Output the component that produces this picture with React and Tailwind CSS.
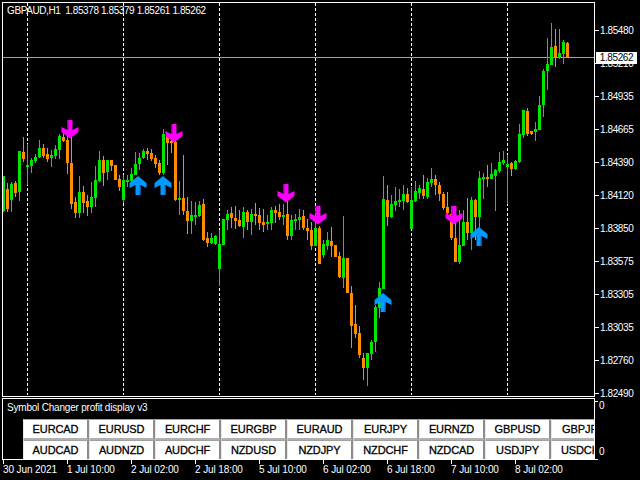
const UP = 1
const DN = 0

// [type, wickTop, wickBottom, bodyTop, bodyBottom], one candle every 4px from x=3
const candles = [
  [UP, 176, 212, 176, 211], [DN, 183, 212, 189, 209], [UP, 182, 212, 184, 200], [DN, 181, 197, 183, 193],
  [UP, 151, 201, 151, 192], [DN, 137, 162, 152, 159], [UP, 144, 185, 165, 167], [UP, 158, 173, 160, 166],
  [UP, 154, 163, 157, 161], [UP, 140, 158, 148, 157], [DN, 144, 158, 148, 156], [DN, 148, 162, 154, 159],
  [UP, 150, 167, 155, 158], [UP, 145, 159, 149, 156], [UP, 134, 159, 136, 150], [DN, 133, 142, 137, 141],
  [DN, 135, 174, 140, 163], [DN, 137, 209, 163, 204], [DN, 197, 218, 202, 213], [UP, 176, 218, 192, 213],
  [DN, 186, 213, 192, 203], [DN, 195, 216, 201, 207], [UP, 182, 213, 197, 207], [UP, 166, 207, 180, 198],
  [UP, 151, 182, 160, 181], [DN, 156, 186, 160, 173], [UP, 160, 180, 160, 172], [DN, 160, 171, 160, 166],
  [DN, 165, 180, 165, 180], [DN, 175, 191, 179, 187], [UP, 175, 203, 180, 200], [UP, 175, 187, 180, 182],
  [UP, 168, 182, 174, 181], [UP, 152, 175, 164, 175], [UP, 153, 170, 158, 164], [UP, 149, 159, 151, 158],
  [DN, 148, 160, 151, 154], [DN, 149, 161, 153, 159], [DN, 155, 168, 158, 164], [DN, 160, 175, 163, 173],
  [UP, 129, 175, 134, 173], [DN, 135, 165, 135, 143], [DN, 140, 153, 141, 143], [DN, 141, 201, 142, 200],
  [UP, 181, 215, 198, 200], [DN, 155, 215, 198, 211], [DN, 197, 234, 211, 221], [UP, 201, 234, 215, 221],
  [UP, 202, 225, 215, 217], [UP, 201, 217, 205, 216], [DN, 199, 241, 204, 240], [DN, 232, 247, 238, 243],
  [UP, 233, 244, 238, 243], [UP, 235, 245, 236, 244], [UP, 230, 286, 244, 269], [UP, 219, 245, 219, 245],
  [UP, 210, 230, 214, 220], [DN, 207, 228, 213, 218], [DN, 206, 229, 218, 221], [DN, 210, 227, 220, 226],
  [UP, 207, 238, 212, 227], [DN, 210, 230, 212, 222], [UP, 209, 235, 214, 222], [DN, 203, 225, 214, 216],
  [DN, 208, 230, 215, 223], [DN, 209, 232, 222, 225], [UP, 215, 230, 222, 224], [UP, 207, 230, 210, 223],
  [DN, 206, 223, 210, 213], [DN, 204, 220, 212, 217], [UP, 204, 225, 215, 216], [DN, 201, 240, 214, 236],
  [UP, 215, 240, 220, 236], [UP, 214, 230, 219, 221], [UP, 209, 230, 217, 220], [DN, 210, 230, 216, 228],
  [DN, 219, 240, 228, 231], [DN, 222, 250, 230, 246], [UP, 220, 246, 228, 246], [DN, 226, 264, 228, 264],
  [UP, 240, 258, 244, 255], [UP, 232, 250, 240, 246], [DN, 227, 257, 241, 246], [DN, 245, 257, 245, 257],
  [DN, 252, 278, 256, 277], [UP, 216, 288, 258, 278], [DN, 258, 293, 258, 293], [DN, 286, 348, 293, 326],
  [DN, 305, 338, 324, 334], [DN, 326, 358, 333, 355], [DN, 353, 380, 358, 368], [UP, 353, 386, 353, 368],
  [UP, 340, 360, 342, 354], [UP, 305, 352, 307, 342], [UP, 282, 318, 288, 308], [UP, 176, 289, 199, 289],
  [DN, 185, 226, 200, 217], [UP, 195, 218, 204, 217], [UP, 187, 211, 201, 205], [UP, 189, 207, 200, 202],
  [UP, 185, 210, 194, 201], [DN, 188, 203, 194, 202], [UP, 187, 229, 200, 229], [UP, 181, 202, 191, 201],
  [UP, 185, 199, 188, 193], [DN, 175, 199, 189, 196], [UP, 178, 199, 182, 197], [UP, 168, 187, 179, 183],
  [DN, 175, 195, 179, 185], [DN, 182, 201, 185, 194], [DN, 192, 210, 194, 208], [DN, 192, 216, 207, 213],
  [DN, 206, 240, 214, 238], [DN, 216, 262, 238, 262], [UP, 210, 264, 245, 262], [UP, 210, 246, 222, 246],
  [DN, 198, 240, 222, 233], [UP, 197, 250, 200, 233], [DN, 199, 240, 200, 217], [UP, 171, 228, 178, 217],
  [UP, 173, 199, 177, 179], [DN, 165, 187, 177, 179], [UP, 163, 179, 174, 179], [UP, 169, 211, 170, 176],
  [UP, 152, 173, 162, 171], [UP, 151, 165, 160, 163], [UP, 155, 204, 164, 167], [DN, 162, 176, 163, 169],
  [UP, 160, 170, 161, 169], [UP, 124, 163, 134, 162], [UP, 110, 138, 110, 135], [DN, 108, 136, 111, 134],
  [DN, 131, 135, 131, 134], [UP, 122, 141, 129, 132], [UP, 96, 130, 105, 130], [UP, 69, 117, 71, 105],
  [UP, 38, 90, 64, 71], [UP, 23, 65, 47, 65], [DN, 29, 67, 46, 58], [UP, 29, 59, 53, 58],
  [UP, 40, 64, 42, 54], [DN, 42, 58, 43, 57],
]

const downArrows = [[70, 120], [174, 124], [286, 184], [318, 206], [454, 206]]
const upArrows = [[138, 176], [163, 176], [383, 293], [479, 227]]
const gridLines = [27, 123, 219, 315, 411, 507]

const prices = ['1.85480', '1.85210', '1.84935', '1.84665', '1.84390', '1.84120', '1.83850', '1.83575', '1.83305', '1.83035', '1.82760', '1.82490']
const times = ['30 Jun 2021', '1 Jul 10:00', '2 Jul 02:00', '2 Jul 18:00', '5 Jul 10:00', '6 Jul 02:00', '6 Jul 18:00', '7 Jul 10:00', '8 Jul 02:00']
const rowOne = ['EURCAD', 'EURUSD', 'EURCHF', 'EURGBP', 'EURAUD', 'EURJPY', 'EURNZD', 'GBPUSD', 'GBPJPY']
const rowTwo = ['AUDCAD', 'AUDNZD', 'AUDCHF', 'NZDUSD', 'NZDJPY', 'NZDCHF', 'NZDCAD', 'USDJPY', 'USDCHF']

const Chart = () => (
  <svg viewBox="3 3 591 392" width="591" height="392" shapeRendering="crispEdges" className="block">
    {gridLines.map((x) => (
      <line key={x} x1={x + 0.5} x2={x + 0.5} y1="3" y2="395" stroke="#fff" strokeDasharray="3 2" />
    ))}
    <rect x="3" y="57" width="591" height="1" fill="#a3a3a3" />
    {candles.map(([type, wt, wb, bt, bb], i) => {
      const x = 3 + i * 4
      const color = type === UP ? '#00e600' : '#ff8c00'
      return (
        <g key={i} fill={color}>
          <rect x={x} y={wt} width="1" height={wb - wt} />
          <rect x={x - 1} y={bt} width="3" height={Math.max(bb - bt, 2)} />
        </g>
      )
    })}
    {downArrows.map(([x, y]) => (
      <g key={x} transform={`translate(${x} ${y})`} shapeRendering="auto">
        <polygon fill="#ff00ff" points="-2.5,0 2.5,0 2.5,10 8.5,7 8.5,12 0,18.5 -8.5,12 -8.5,7 -2.5,10" />
        <rect x="-2.5" y="0" width="1" height="10" fill="#a000a0" />
      </g>
    ))}
    {upArrows.map(([x, y]) => (
      <g key={x} transform={`translate(${x} ${y})`} shapeRendering="auto">
        <polygon fill="#0099ff" points="0,0 8.5,7 8.5,12 2.5,9 2.5,19 -2.5,19 -2.5,9 -8.5,12 -8.5,7" />
        <rect x="1.5" y="9" width="1" height="10" fill="#0066cc" />
      </g>
    ))}
  </svg>
)

const SymbolButton = ({ label }) => (
  <button className="w-[66px] h-[21px] shrink-0 pt-px bg-white border-t border-l border-t-[#a0a0a0] border-l-[#e8e8e8] border-r-2 border-b-2 border-r-[#8c8c8c] border-b-[#b0b0b0] text-black text-[11px] leading-none tracking-[-0.1px] [-webkit-text-stroke:0.3px_black]">
    {label}
  </button>
)

const App = () => {
  return (
    <div className="w-[640px] h-[480px] bg-black text-white overflow-hidden font-['Liberation_Sans',sans-serif] text-[10px] leading-none pt-[2px] pl-[2px]">
      <div className="flex h-[395px]">
        <div className="relative w-[593px] h-[395px] border border-white shrink-0">
          <Chart />
          <div className="absolute left-[4px] top-[3px] whitespace-pre tracking-[-0.4px]">GBPAUD,H1  1.85378 1.85379 1.85261 1.85262</div>
        </div>
        <div className="relative flex flex-col gap-[26px] pt-[25px]">
          {prices.map((p) => (
            <div key={p} className="flex items-center h-[7px]">
              <span className="w-[4px] h-px bg-white" />
              <span className="ml-[1px] tracking-[-0.4px]">{p}</span>
            </div>
          ))}
          <div className="absolute left-[1px] top-[50px] w-[41px] h-[12px] bg-white text-black tracking-[-0.4px] flex items-center justify-center">1.85262</div>
        </div>
      </div>

      <div className="flex mt-[1px] h-[62px]">
        <div className="w-[593px] h-[62px] border border-white shrink-0 overflow-hidden">
          <div className="pl-[4px] pt-[4px] h-[20px] tracking-[-0.2px]">Symbol Changer profit display v3</div>
          <div className="flex pl-[20px]">
            {rowOne.map((s) => <SymbolButton key={s} label={s} />)}
          </div>
          <div className="flex pl-[20px]">
            {rowTwo.map((s) => <SymbolButton key={s} label={s} />)}
          </div>
        </div>
        <div className="flex flex-col justify-between w-[3px] pt-[3px]">
          <span className="h-px bg-white" />
          <span className="h-px bg-white" />
        </div>
        <div className="flex flex-col justify-between pt-[3px] pb-[3px] pl-[1px]">
          <span>0</span>
          <span>0</span>
        </div>
      </div>

      <div className="flex pl-[1px]">
        {times.map((t) => (
          <div key={t} className="w-[64px] shrink-0">
            <div className="w-px h-[4px] bg-white" />
            <div className="mt-[1px] whitespace-nowrap tracking-[-0.1px]">{t}</div>
          </div>
        ))}
      </div>
    </div>
  )
}

export default App
